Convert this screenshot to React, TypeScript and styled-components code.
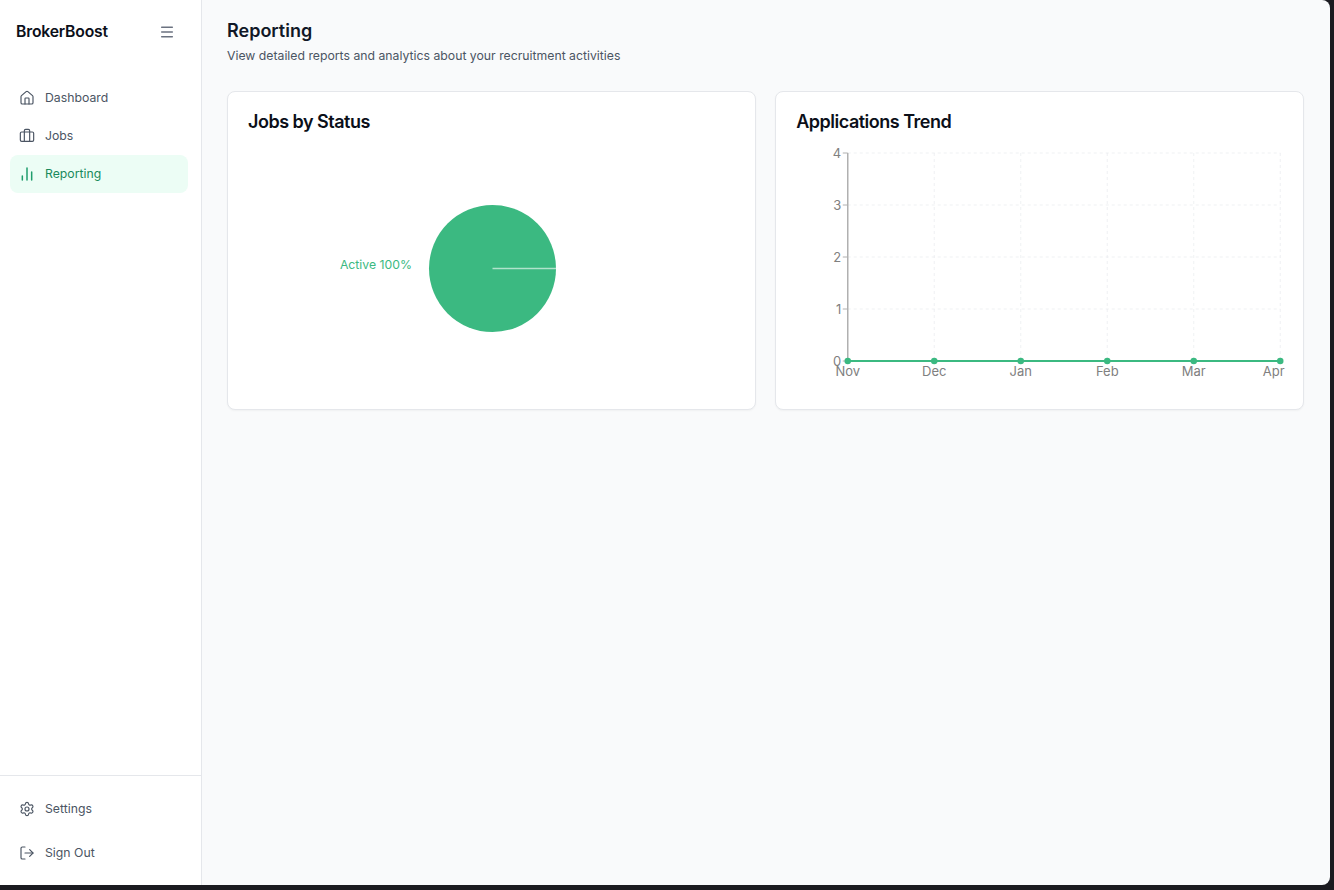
import * as React from 'react'
import styled, { createGlobalStyle } from 'styled-components'
import { BarChart2, Briefcase, Home, LogOut, Menu, Settings } from 'lucide-react'

const GlobalStyle = createGlobalStyle`
  html, body {
    margin: 0;
    padding: 0;
    height: 100%;
    background: #1b1b20;
    overflow: hidden;
  }
  body {
    font-family: Inter, "Liberation Sans", sans-serif;
    -webkit-font-smoothing: antialiased;
  }
`

const Frame = styled.div`
  display: flex;
  width: 1330px;
  height: 885px;
  background: #f9fafb;
  border-radius: 0 8px 8px 0;
  overflow: hidden;
`

const Sidebar = styled.aside`
  display: flex;
  flex-direction: column;
  flex: none;
  width: 201px;
  background: #fff;
  border-right: 1px solid #e5e7eb;
`

const Brand = styled.div`
  display: flex;
  align-items: center;
  justify-content: space-between;
  height: 63px;
  padding: 0 26px 0 16px;
`

const BrandName = styled.span`
  font-size: 15.75px;
  font-weight: 600;
  color: #0b0f19;
  letter-spacing: -0.2px;
`

const MenuButton = styled.span`
  display: flex;
  color: #6b7280;
`

const Nav = styled.nav`
  display: flex;
  flex-direction: column;
  flex: 1;
  padding: 16px 13px 0 10px;
`

const NavItem = styled.a<{ $active?: boolean }>`
  display: flex;
  align-items: center;
  gap: 10px;
  height: 38px;
  padding: 0 9px;
  border-radius: 8px;
  font-size: 12.25px;
  line-height: 16px;
  font-weight: 400;
  color: ${p => (p.$active ? '#1a8a5c' : '#4b5563')};
  background: ${p => (p.$active ? '#ecfdf5' : 'transparent')};
  svg {
    flex: none;
    color: ${p => (p.$active ? '#1f9d6c' : '#4b5563')};
  }
`

const SidebarFoot = styled.div`
  display: flex;
  flex-direction: column;
  gap: 6px;
  padding: 14px 13px 13px 10px;
  border-top: 1px solid #e5e7eb;
`

const Main = styled.main`
  flex: 1;
  min-width: 0;
  padding: 20px 26px 0 25px;
`

const PageTitle = styled.h1`
  margin: 0;
  font-size: 18px;
  line-height: 22px;
  font-weight: 600;
  color: #111827;
`

const PageSubtitle = styled.p`
  margin: 5px 0 0;
  font-size: 12.25px;
  line-height: 18px;
  color: #4b5563;
`

const CardGrid = styled.div`
  display: grid;
  grid-template-columns: minmax(0, 1fr) minmax(0, 1fr);
  gap: 19.5px;
  margin-top: 26px;
`

const Card = styled.section`
  box-sizing: border-box;
  height: 318.5px;
  padding: 19px 20px;
  background: #fff;
  border: 1px solid #e5e7eb;
  border-radius: 8px;
  box-shadow: 0 1px 2px rgba(0, 0, 0, 0.04);
`

const CardTitle = styled.h2`
  margin: 0;
  font-size: 18px;
  line-height: 22px;
  font-weight: 600;
  letter-spacing: -0.5px;
  color: #0b0f19;
`

const ChartSvg = styled.svg`
  display: block;
  margin-top: 15px;
  overflow: visible;
  font-family: Inter, "Liberation Sans", sans-serif;
`

const GREEN = '#3bb981'
const AXIS = '#b0b0b0'
const LABEL = '#808080'

const months = ['Nov', 'Dec', 'Jan', 'Feb', 'Mar', 'Apr']
const LEFT = 51.75
const STEP = 86.5
const TOP = 5
const ROW = 52

const StatusPie = () => (
  <ChartSvg width={486} height={240} viewBox="0 0 486 240">
    <circle cx={244.5} cy={120.5} r={63.5} fill={GREEN} />
    <line x1={244.5} y1={120.5} x2={308} y2={120.5} stroke="#ffffff" strokeOpacity={0.6} strokeWidth={1.5} />
    <text x={164} y={121} textAnchor="end" fontSize={12.25} fill={GREEN}>
      Active 100%
    </text>
  </ChartSvg>
)

const TrendChart = () => (
  <ChartSvg width={486} height={240} viewBox="0 0 486 240">
    {[0, 1, 2, 3].map(i => (
      <line
        key={i}
        x1={LEFT}
        x2={LEFT + STEP * 5}
        y1={TOP + ROW * i}
        y2={TOP + ROW * i}
        stroke="#e5e7eb"
        strokeOpacity={0.6}
        strokeDasharray="3 3"
      />
    ))}
    {months.slice(1).map((_, i) => (
      <line
        key={i}
        x1={LEFT + STEP * (i + 1)}
        x2={LEFT + STEP * (i + 1)}
        y1={TOP}
        y2={TOP + ROW * 4}
        stroke="#e5e7eb"
        strokeOpacity={0.6}
        strokeDasharray="3 3"
      />
    ))}
    <line x1={LEFT} x2={LEFT} y1={TOP} y2={TOP + ROW * 4} stroke={AXIS} strokeWidth={1.5} />
    {[4, 3, 2, 1, 0].map((v, i) => (
      <g key={v}>
        <line x1={LEFT - 5} x2={LEFT} y1={TOP + ROW * i} y2={TOP + ROW * i} stroke={AXIS} />
        <text x={LEFT - 6.5} y={TOP + ROW * i + 4.5} textAnchor="end" fontSize={13} fill={LABEL}>
          {v}
        </text>
      </g>
    ))}
    {months.map((m, i) => (
      <text
        key={m}
        x={i === 5 ? LEFT + STEP * i - 6.5 : LEFT + STEP * i}
        y={TOP + ROW * 4 + 15}
        textAnchor="middle"
        fontSize={13}
        fill={LABEL}
      >
        {m}
      </text>
    ))}
    <line x1={LEFT} x2={LEFT + STEP * 5} y1={TOP + ROW * 4} y2={TOP + ROW * 4} stroke={GREEN} strokeWidth={2} />
    {months.map((m, i) => (
      <circle key={m} cx={LEFT + STEP * i} cy={TOP + ROW * 4} r={3.25} fill={GREEN} />
    ))}
  </ChartSvg>
)

export default function App() {
  return (
    <>
      <GlobalStyle />
      <Frame>
        <Sidebar>
          <Brand>
            <BrandName>BrokerBoost</BrandName>
            <MenuButton>
              <Menu size={16} strokeWidth={2.25} />
            </MenuButton>
          </Brand>
          <Nav>
            <NavItem>
              <Home size={16} strokeWidth={1.75} />
              Dashboard
            </NavItem>
            <NavItem>
              <Briefcase size={16} strokeWidth={1.75} />
              Jobs
            </NavItem>
            <NavItem $active>
              <BarChart2 size={16} strokeWidth={2.25} />
              Reporting
            </NavItem>
          </Nav>
          <SidebarFoot>
            <NavItem>
              <Settings size={16} strokeWidth={1.75} />
              Settings
            </NavItem>
            <NavItem>
              <LogOut size={16} strokeWidth={1.75} />
              Sign Out
            </NavItem>
          </SidebarFoot>
        </Sidebar>
        <Main>
          <PageTitle>Reporting</PageTitle>
          <PageSubtitle>View detailed reports and analytics about your recruitment activities</PageSubtitle>
          <CardGrid>
            <Card>
              <CardTitle>Jobs by Status</CardTitle>
              <StatusPie />
            </Card>
            <Card>
              <CardTitle>Applications Trend</CardTitle>
              <TrendChart />
            </Card>
          </CardGrid>
        </Main>
      </Frame>
    </>
  )
}
